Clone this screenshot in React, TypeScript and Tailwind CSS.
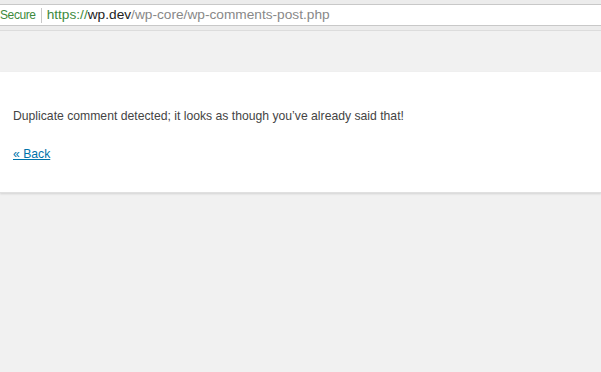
import React from 'react'

const App = () => {
  return (
    <div className="w-[601px] h-[372px] overflow-hidden bg-[#f1f1f1] font-['Liberation_Sans',sans-serif]">
      {/* Browser address bar */}
      <div className="pt-[4px] bg-[#ececec]">
        <div className="h-[22px] bg-white border-y border-[#c8c8c8] flex items-center text-[13.7px] leading-none whitespace-nowrap">
          <span className="text-[#3c8a3c] text-[12px] tracking-[-0.4px]">Secure</span>
          <span className="ml-[5px] mr-[5px] h-[15px] w-px bg-[#c8c8c8]" />
          <span className="text-[#3c8a3c]">https://</span>
          <span className="text-[#222]">wp.dev</span>
          <span className="text-[#888]">/wp-core/wp-comments-post.php</span>
        </div>
        <div className="h-[5px] bg-[#ececec] border-b border-[#dcdcdc]" />
      </div>

      {/* WP die page */}
      <div className="mt-[41px] bg-white shadow-[0_1px_2px_rgba(0,0,0,0.13)] border-b border-[#e0e0e0] pt-[35px] pb-[28px] px-[13px] text-[12.2px] text-[#444]">
        <p className="leading-[19px]">Duplicate comment detected; it looks as though you’ve already said that!</p>
        <p className="mt-[19px] leading-[19px]">
          <a href="#" className="text-[#0073aa] underline">« Back</a>
        </p>
      </div>
    </div>
  )
}

export default App
